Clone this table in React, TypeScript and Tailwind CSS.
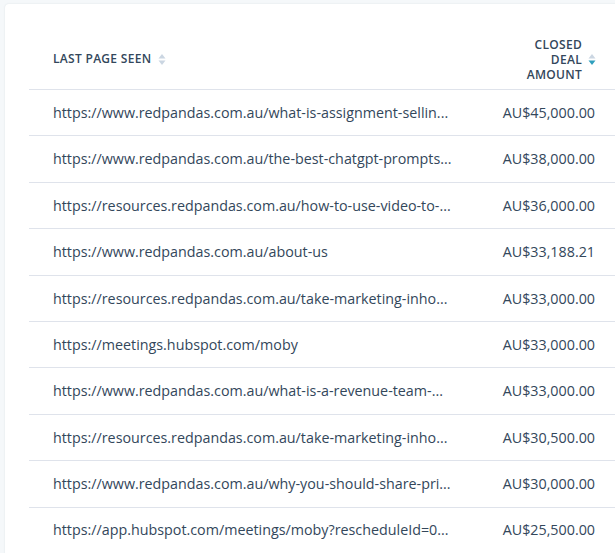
import React from 'react';

type Row = { page: string; amount: string };

const rows: Row[] = [
  { page: 'https://www.redpandas.com.au/what-is-assignment-sellin...', amount: 'AU$45,000.00' },
  { page: 'https://www.redpandas.com.au/the-best-chatgpt-prompts...', amount: 'AU$38,000.00' },
  { page: 'https://resources.redpandas.com.au/how-to-use-video-to-...', amount: 'AU$36,000.00' },
  { page: 'https://www.redpandas.com.au/about-us', amount: 'AU$33,188.21' },
  { page: 'https://resources.redpandas.com.au/take-marketing-inho...', amount: 'AU$33,000.00' },
  { page: 'https://meetings.hubspot.com/moby', amount: 'AU$33,000.00' },
  { page: 'https://www.redpandas.com.au/what-is-a-revenue-team-...', amount: 'AU$33,000.00' },
  { page: 'https://resources.redpandas.com.au/take-marketing-inho...', amount: 'AU$30,500.00' },
  { page: 'https://www.redpandas.com.au/why-you-should-share-pri...', amount: 'AU$30,000.00' },
  { page: 'https://app.hubspot.com/meetings/moby?rescheduleId=0...', amount: 'AU$25,500.00' },
];

function SortIcon({ active }: { active?: boolean }) {
  return (
    <svg width="8" height="13" viewBox="0 0 8 13" className="shrink-0">
      <path d="M4 1 L7.5 5.5 L0.5 5.5 Z" fill="#cbd6e2" />
      <path d="M4 12 L7.5 7.5 L0.5 7.5 Z" fill={active ? '#2f9fbd' : '#cbd6e2'} />
    </svg>
  );
}

export default function App() {
  return (
    <main
      className="h-[553px] w-[615px] overflow-hidden bg-[#f5f8fa] pl-[5px] pt-[4px]"
      style={{ fontFamily: '"Open Sans", "Liberation Sans", sans-serif' }}
    >
      <div className="w-[640px] h-[600px] rounded-tl-[4px] bg-white pl-[24px] pt-[25px] shadow-[0_0_2px_rgba(45,62,80,0.12)]">
        {/* Header */}
        <div className="flex h-[61px] w-[590px] items-center border-b border-[#dfe3eb] text-[12px] font-semibold tracking-[0.3px] text-[#33475b]">
          <div className="flex w-[445px] items-center gap-[7px] pl-[24px]">
            <span>LAST PAGE SEEN</span>
            <SortIcon />
          </div>
          <div className="flex flex-1 items-center justify-end gap-[6px] pr-[23px]">
            <span className="text-right leading-[15px]">
              CLOSED
              <br />
              DEAL
              <br />
              AMOUNT
            </span>
            <SortIcon active />
          </div>
        </div>

        {/* Rows */}
        {rows.map((r, i) => (
          <div
            key={i}
            className="flex h-[46.4px] w-[590px] items-center border-b border-[#dfe3eb] text-[14.3px] text-[#33475b]"
          >
            <div className="w-[445px] whitespace-nowrap pl-[24px]">{r.page}</div>
            <div className="flex-1 whitespace-nowrap pr-[24px] text-right">{r.amount}</div>
          </div>
        ))}
      </div>
    </main>
  );
}
